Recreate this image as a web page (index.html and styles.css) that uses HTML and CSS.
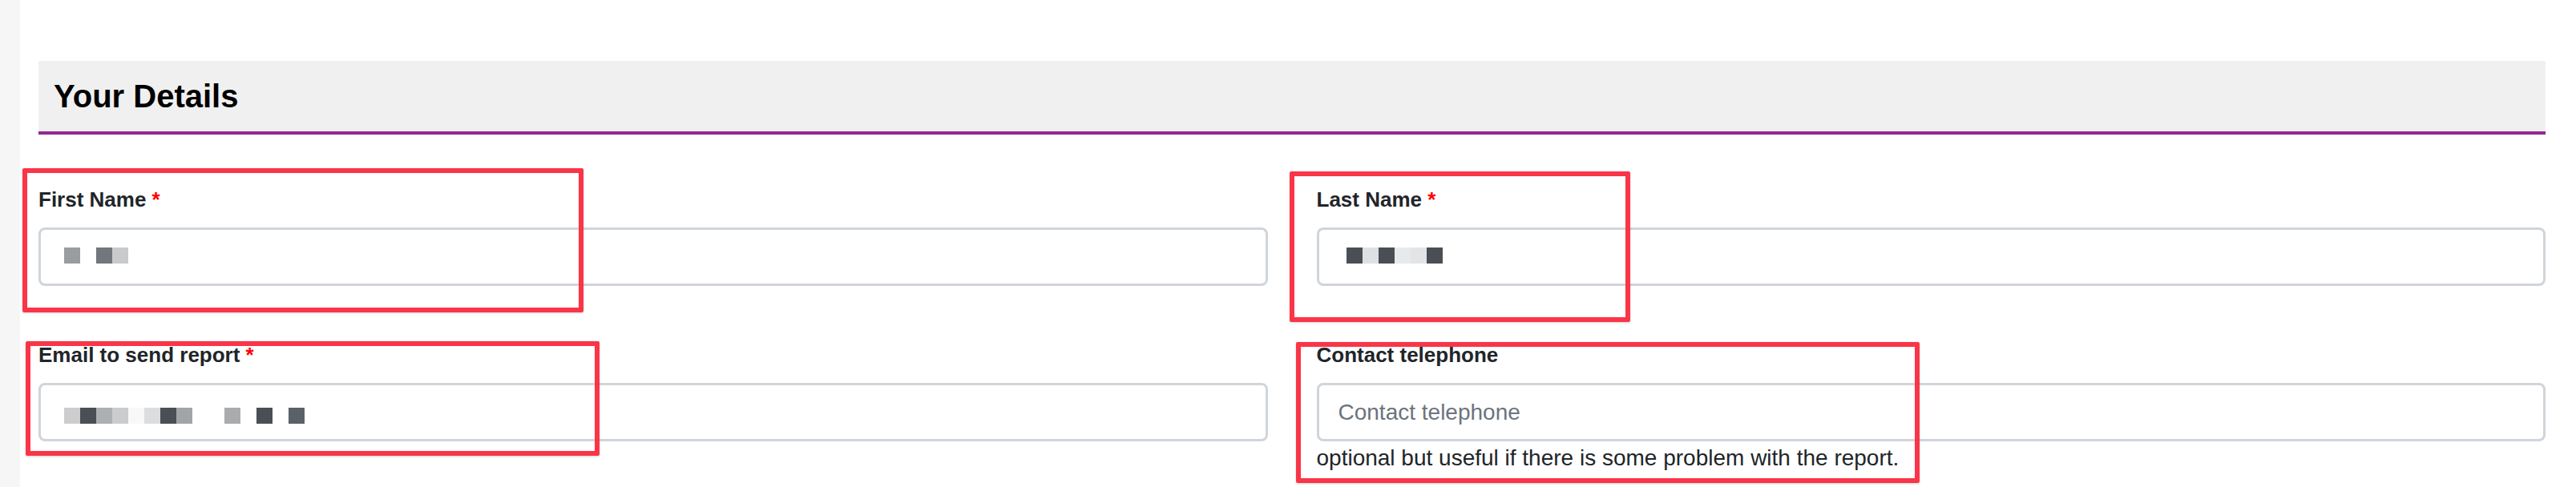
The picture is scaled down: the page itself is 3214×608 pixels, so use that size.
FILE: index.html
```html
<!DOCTYPE html>
<html lang="en">
<head>
<meta charset="utf-8">
<title>Your Details</title>
<link rel="stylesheet" href="styles.css">
</head>
<body>
<div class="page">
  <aside class="strip"></aside>
  <main class="main">
    <section class="panel">
      <h3 class="panel-title">Your Details</h3>
      <div class="form-grid">
        <div class="field">
          <label class="label">First Name <span class="req">*</span></label>
          <div class="control">
            <input class="input" type="text" aria-label="First Name">
            <span class="mosaic m-first">
              <i class="px k1"></i><i class="px"></i><i class="px k2"></i><i class="px k3"></i>
            </span>
          </div>
        </div>
        <div class="field">
          <label class="label">Last Name <span class="req">*</span></label>
          <div class="control">
            <input class="input" type="text" aria-label="Last Name">
            <span class="mosaic m-last">
              <i class="px kd"></i><i class="px k4"></i><i class="px kd"></i><i class="px k5"></i><i class="px k6"></i><i class="px kd"></i>
            </span>
          </div>
        </div>
        <div class="field">
          <label class="label">Email to send report <span class="req">*</span></label>
          <div class="control">
            <input class="input" type="text" aria-label="Email to send report">
            <span class="mosaic m-email">
              <i class="px k7"></i><i class="px kd"></i><i class="px k8"></i><i class="px k9"></i><i class="px k10"></i><i class="px k11"></i><i class="px kd"></i><i class="px k12"></i><i class="px"></i><i class="px"></i><i class="px k13"></i><i class="px"></i><i class="px kd"></i><i class="px"></i><i class="px k14"></i>
            </span>
          </div>
        </div>
        <div class="field">
          <label class="label">Contact telephone</label>
          <div class="control">
            <input class="input" type="text" placeholder="Contact telephone">
          </div>
          <p class="help">optional but useful if there is some problem with the report.</p>
        </div>
      </div>
    </section>
  </main>
</div>
<div class="mark mark-1"></div>
<div class="mark mark-2"></div>
<div class="mark mark-3"></div>
<div class="mark mark-4"></div>
</body>
</html>
```

FILE: styles.css
```css
* { box-sizing: border-box; }
html, body { margin: 0; padding: 0; }
body {
  background: #ffffff;
  font-family: "Liberation Sans", Arial, Helvetica, sans-serif;
  color: #212529;
  width: 3214px;
  height: 608px;
  overflow: hidden;
  position: relative;
}
.page {
  display: flex;
  height: 608px;
}
.strip {
  width: 25px;
  flex: 0 0 25px;
  background: #f6f6f6;
}
.main {
  flex: 1;
  padding: 76px 38px 0 23px;
}
.panel-title {
  margin: 0;
  height: 92px;
  line-height: 88px;
  padding-left: 19px;
  font-size: 40px;
  font-weight: 700;
  color: #000;
  background: #f0f0f0;
  border-bottom: 4px solid #922a8e;
}
.form-grid {
  display: grid;
  grid-template-columns: 1fr 1fr;
  column-gap: 61px;
  row-gap: 67px;
  margin-top: 62px;
}
.field { min-width: 0; }
.label {
  display: block;
  font-size: 26px;
  line-height: 39px;
  font-weight: 700;
  color: #212529;
  margin-bottom: 15px;
}
.req { color: #ff0000; }
.control { position: relative; }
.input {
  display: block;
  width: 100%;
  height: 73px;
  border: 3px solid #d0d5db;
  border-radius: 8px;
  padding: 0 24px;
  font-family: inherit;
  font-size: 28px;
  color: #212529;
  background: #fff;
  outline: none;
}
.input::placeholder { color: #6c737d; opacity: 1; }
.help {
  margin: 0;
  font-size: 28px;
  line-height: 42px;
  color: #212529;
}
.mosaic {
  position: absolute;
  display: flex;
  top: 25px;
  left: 32px;
}
.m-email { top: 31px; }
.m-last { left: 37px; }
.px {
  display: block;
  width: 20px;
  height: 20px;
}
.kd { background: #4a4f56; }
.k1 { background: #9a9ca0; }
.k2 { background: #72767d; }
.k3 { background: #c9cacc; }
.k4 { background: #dfe0e2; }
.k5 { background: #e8e9ea; }
.k6 { background: #e3e4e6; }
.k7 { background: #cdcdcf; }
.k8 { background: #adb0b2; }
.k9 { background: #cbcccd; }
.k10 { background: #f8f8f8; }
.k11 { background: #dcdddf; }
.k12 { background: #a2a5a8; }
.k13 { background: #a9abad; }
.k14 { background: #5b6168; }
.mark {
  position: absolute;
  border: 6px solid #fa3548;
  border-radius: 2px;
  box-shadow: 0 1px 3px rgba(0, 0, 0, 0.18);
  pointer-events: none;
}
.mark-1 { left: 28px; top: 210px; width: 700px; height: 180px; }
.mark-2 { left: 32px; top: 426px; width: 716px; height: 143px; }
.mark-3 { left: 1609px; top: 214px; width: 425px; height: 188px; }
.mark-4 { left: 1617px; top: 427px; width: 778px; height: 176px; }
```
